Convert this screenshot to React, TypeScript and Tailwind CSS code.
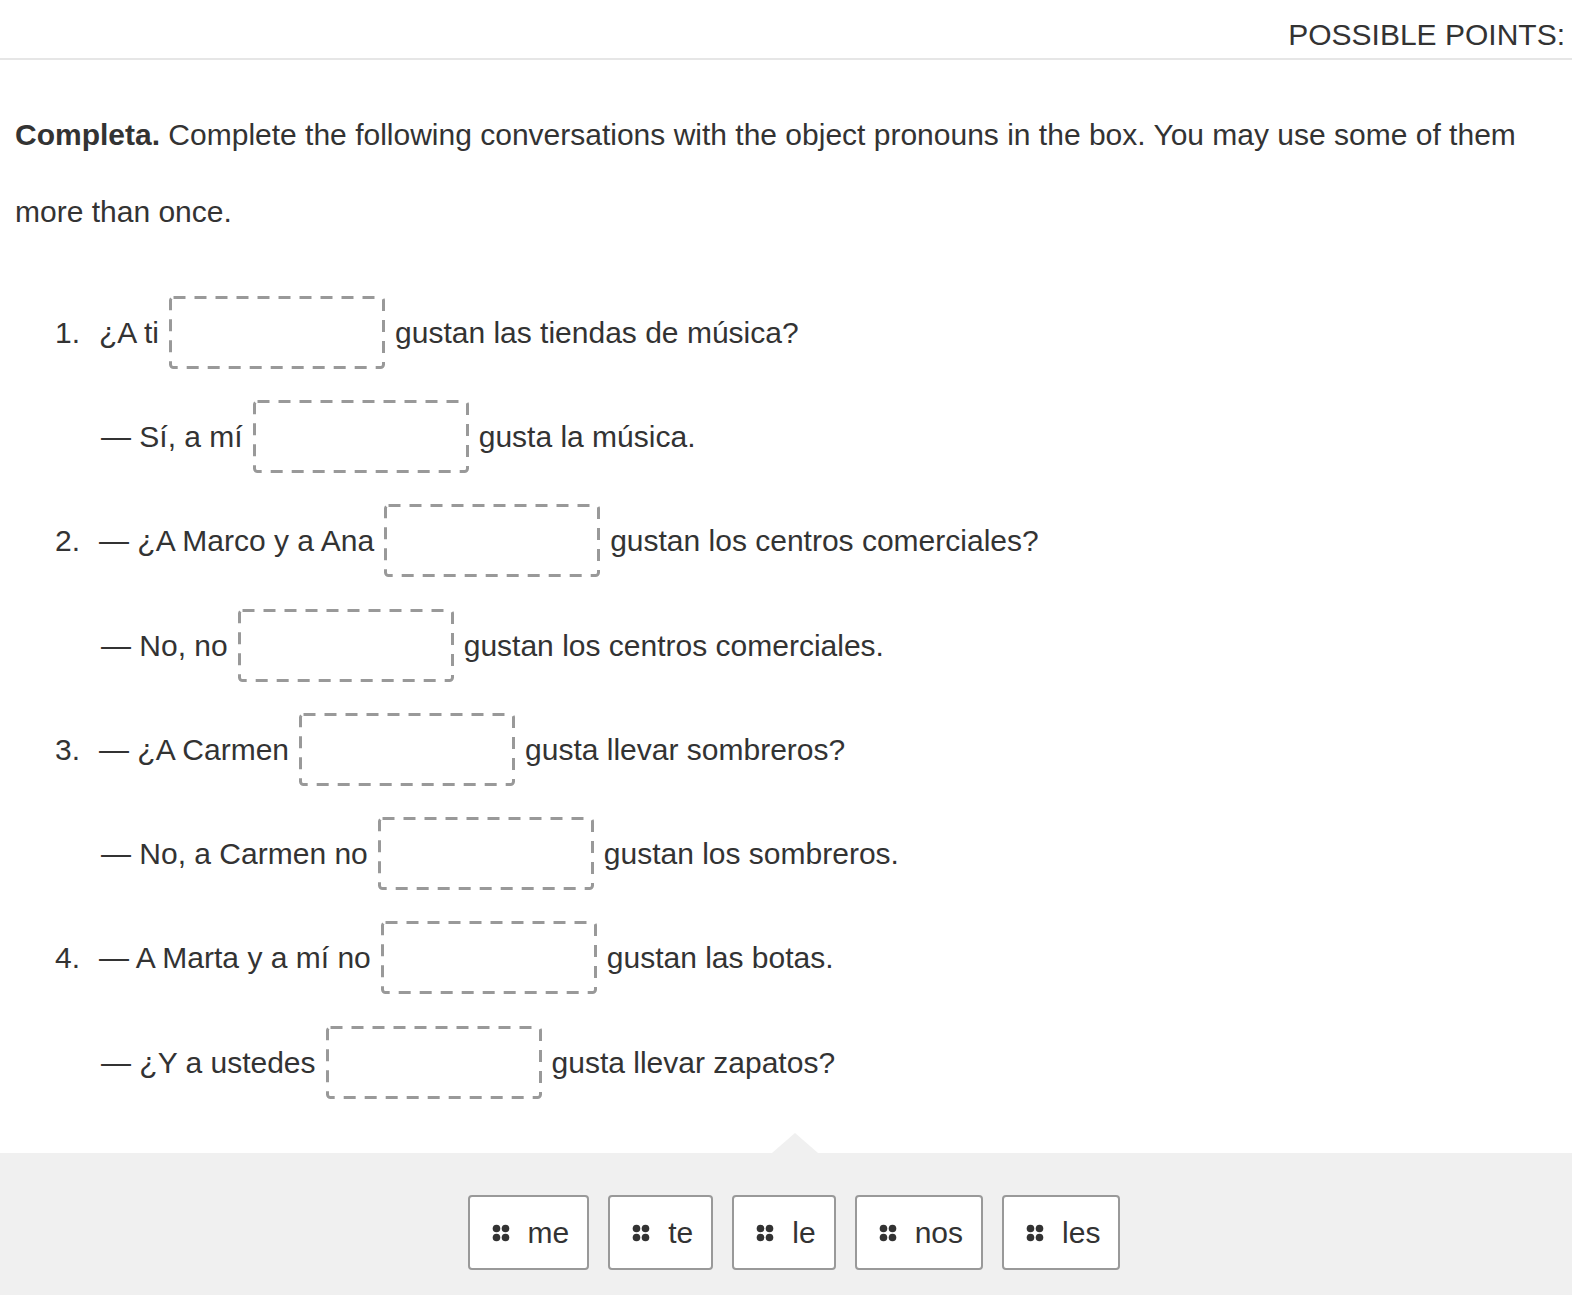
import React from "react";

type Row = { num?: string; before: string; after: string };

const rows: Row[] = [
  { num: "1.", before: "¿A ti", after: "gustan las tiendas de música?" },
  { before: "— Sí, a mí", after: "gusta la música." },
  { num: "2.", before: "— ¿A Marco y a Ana", after: "gustan los centros comerciales?" },
  { before: "— No, no", after: "gustan los centros comerciales." },
  { num: "3.", before: "— ¿A Carmen", after: "gusta llevar sombreros?" },
  { before: "— No, a Carmen no", after: "gustan los sombreros." },
  { num: "4.", before: "— A Marta y a mí no", after: "gustan las botas." },
  { before: "— ¿Y a ustedes", after: "gusta llevar zapatos?" },
];

const words = ["me", "te", "le", "nos", "les"];

const Grip = () => (
  <svg width="18" height="18" viewBox="0 0 18 18" className="shrink-0">
    <circle cx="4.5" cy="4.5" r="3.8" fill="#333" />
    <circle cx="13.5" cy="4.5" r="3.8" fill="#333" />
    <circle cx="4.5" cy="13.5" r="3.8" fill="#333" />
    <circle cx="13.5" cy="13.5" r="3.8" fill="#333" />
  </svg>
);

// empty drop target with long dashes
const Blank = () => (
  <span className="mx-[10px] w-[216px] h-[73px] shrink-0 block">
    <svg width="216" height="73" viewBox="0 0 216 73">
      <rect
        x="1.5"
        y="1.5"
        width="213"
        height="70"
        rx="3"
        fill="none"
        stroke="#999"
        strokeWidth="3"
        strokeDasharray="12 9"
      />
    </svg>
  </span>
);

export default function App() {
  return (
    <div
      className="w-[1572px] h-[1295px] overflow-hidden bg-white text-[#333] flex flex-col"
      style={{ fontFamily: '"Liberation Sans", Arial, sans-serif' }}
    >
      {/* header */}
      <div className="h-[60px] shrink-0 border-b-2 border-[#e6e6e6] flex items-center justify-end overflow-hidden pt-[10px]">
        <span className="text-[30px] whitespace-nowrap mr-[-18px] text-[#333]">POSSIBLE POINTS: 4</span>
      </div>

      {/* instructions */}
      <p className="mt-[36px] pl-[15px] pr-[30px] text-[30px] leading-[77px]">
        <b>Completa.</b> Complete the following conversations with the object pronouns in the box. You may use some of them more than once.
      </p>

      {/* questions */}
      <div className="mt-[30px] flex flex-col">
        {rows.map((r, i) => (
          <div key={i} className="h-[104.3px] flex items-center text-[30px]">
            <span className="w-[55px] shrink-0" />
            <span className="w-[44px] shrink-0">{r.num ?? ""}</span>
            <span className={r.num ? "" : "ml-[2px]"}>{r.before}</span>
            <Blank />
            <span>{r.after}</span>
          </div>
        ))}
      </div>

      {/* tray */}
      <div className="mt-auto relative h-[142px] shrink-0 bg-[#f0f0f0] flex items-start justify-center gap-[19px] pt-[42px] pl-[16px]">
        <div className="absolute left-[772px] top-[-20px] w-0 h-0 border-l-[23px] border-r-[23px] border-b-[20px] border-l-transparent border-r-transparent border-b-[#f0f0f0]" />
        {words.map((w) => (
          <div
            key={w}
            className="h-[75px] pl-[22px] pr-[18px] bg-white border-2 border-[#999] rounded-[4px] flex items-center gap-[18px] text-[30px]"
          >
            <Grip />
            <span>{w}</span>
          </div>
        ))}
      </div>
    </div>
  );
}
